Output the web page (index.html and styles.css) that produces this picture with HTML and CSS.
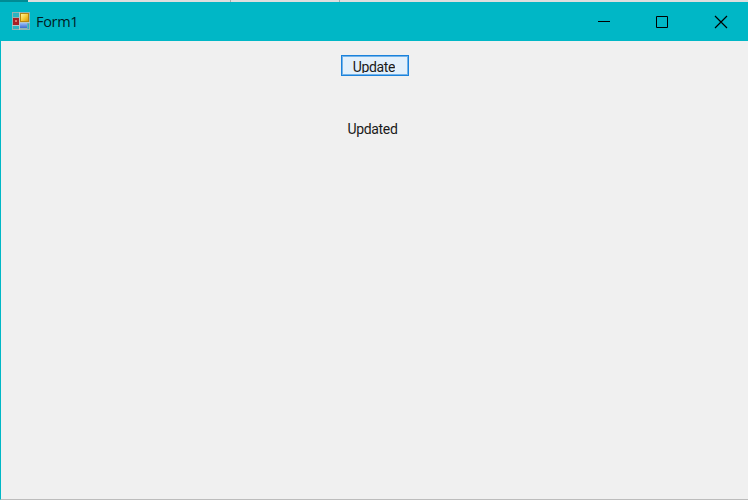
FILE: index.html
```html
<!DOCTYPE html>
<html lang="en">
<head>
<meta charset="utf-8">
<title>Form1</title>
<link rel="stylesheet" href="styles.css">
</head>
<body>
<div class="backdrop"><span class="tab tab-active"></span><span class="tab tab-wide"></span><span class="tab tab-mid"></span></div>
<div class="window">
  <header class="titlebar">
    <svg class="app-icon" width="18" height="18" viewBox="0 0 18 18">
      <defs>
        <linearGradient id="gold" x1="0" y1="0" x2="1" y2="1"><stop offset="0" stop-color="#fff3a0"/><stop offset=".5" stop-color="#f7cf3c"/><stop offset="1" stop-color="#d99c10"/></linearGradient>
        <linearGradient id="blue" x1="0" y1="0" x2="0" y2="1"><stop offset="0" stop-color="#9dbcf5"/><stop offset="1" stop-color="#3c6dd0"/></linearGradient>
      </defs>
      <path fill="#8fb5b5" d="M0 0h18v18H0z"/>
      <path fill="#2bb5c0" d="M1 1h6v4H1zM1 14h6v3H1zM15.500 11.500h1.500v5.500h-1.500z"/>
      <path fill="#b4c8c8" d="M7 0h1v18H7zM0 13h8v1H0zM8 10h10v1H8z"/>
      <path fill="#a81f24" d="M1 6h6v7H1z"/>
      <path fill="#d9776c" d="M3 8h2v2H3z"/>
      <path fill="#b8860f" d="M8 1h9v9H8z"/>
      <path fill="url(#gold)" d="M9 2h7v7H9z"/>
      <path fill="url(#blue)" d="M8 11h7v5H8z"/>
    </svg>
    <h1 class="title">Form1</h1>
    <div class="controls">
      <svg width="58" height="38" viewBox="0 0 58 38"><path d="M23 19.500h12"/></svg>
      <svg width="58" height="38" viewBox="0 0 58 38"><path d="M23.500 14.500h11v11h-11z"/></svg>
      <svg width="58" height="38" viewBox="0 0 58 38"><path d="M24 14l12 12M36 14L24 26"/></svg>
    </div>
  </header>
  <main class="client">
    <button class="update"><span class="update-text">Update</span></button>
    <p class="status">Updated</p>
  </main>
</div>
</body>
</html>
```
FILE: styles.css
```css
* { box-sizing: border-box; }
body {
  margin: 0;
  width: 748px;
  height: 500px;
  overflow: hidden;
  font-family: "Open Sans", "Noto Sans", sans-serif;
  color: #111;
}
.backdrop { display: flex; height: 2px; background: #dedede; }
.tab-active { width: 28px; background: #008b94; }
.tab-wide { width: 203px; border-right: 1px solid #aaa; }
.tab-mid { width: 109px; border-right: 1px solid #aaa; }
.window {
  height: 498px;
  border-left: 1px solid #00b7c6;
  border-bottom: 1px solid #bcbcbc;
  background: #f0f0f0;
}
.titlebar {
  display: flex;
  align-items: center;
  height: 39px;
  padding-left: 11px;
  background: #00b7c6;
}
.app-icon { flex: none; margin-bottom: 1px; }
.title {
  margin: 1px 0 0 6px;
  font-size: 14.5px;
  font-weight: 400;
  line-height: 20px;
  letter-spacing: -0.3px;
  color: #001c1f;
}
.controls { display: flex; margin: 0 -1px 1px auto; }
.controls svg { fill: none; stroke: #000; stroke-width: 1; }
.controls svg:last-child { stroke-width: 1.2; }
.client {
  display: flex;
  flex-direction: column;
  align-items: center;
  padding-top: 14px;
}
.update {
  display: flex;
  justify-content: center;
  align-items: flex-start;
  width: 68px;
  height: 21px;
  padding: 2px 1px 0 0;
  border: 1px solid #1a82dc;
  outline: 1px solid #73b3e9;
  outline-offset: -2px;
  background: #e3f0fb;
  font: 14px/18px Roboto, sans-serif;
  color: #1a1a1a;
}
.update-text {
  display: block;
  height: 15px;
  overflow: hidden;
  letter-spacing: -0.35px;
}
.status {
  margin: 44px 0 0 -4px;
  font: 14px/18px Roboto, sans-serif;
  letter-spacing: -0.35px;
  color: #1a1a1a;
}
```
